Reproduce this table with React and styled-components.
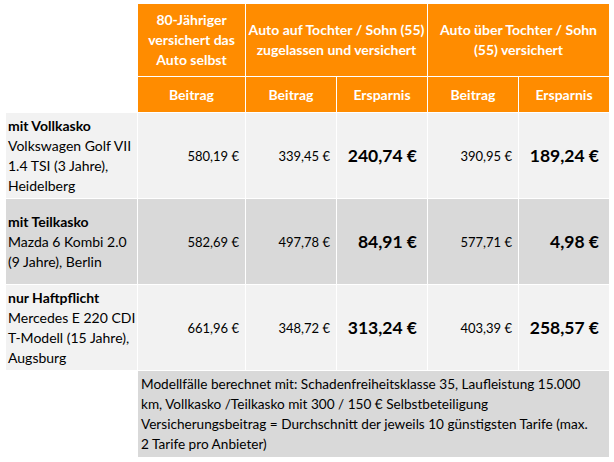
import React from "react";
import styled, { createGlobalStyle } from "styled-components";

const Global = createGlobalStyle`
  html, body { margin: 0; padding: 0; background: #ffffff; }
  body { font-family: Lato, "Noto Sans", "Liberation Sans", sans-serif; color: #000; }
`;

const ORANGE = "#ff8c00";
const LIGHT = "#f2f2f2";
const DARK = "#d9d9d9";

const Page = styled.div`
  padding: 4px 0 0 6px;
`;

const Sheet = styled.div`
  display: grid;
  grid-template-columns: 131px 107px 90px 90px 90px 90px;
  grid-template-rows: 72px 35px 85px 85px 85px 86px;
  gap: 1px;
  font-size: 14px;
  line-height: 20px;
`;

const Corner = styled.div`
  grid-row: span 2;
`;

const HeadCell = styled.div`
  grid-column: span ${(p) => p.$span || 1};
  grid-row: span ${(p) => p.$rows || 1};
  background: ${ORANGE};
  color: #ffffff;
  font-weight: 700;
  display: flex;
  align-items: center;
  justify-content: center;
  text-align: center;
  white-space: nowrap;
  padding: 0 2px;
`;

const LabelCell = styled.div`
  background: ${(p) => (p.$dark ? DARK : LIGHT)};
  display: flex;
  flex-direction: column;
  justify-content: center;
  padding: 0 2px;
  white-space: nowrap;
`;

const Category = styled.span`
  font-weight: 700;
`;

const NumCell = styled.div`
  background: ${(p) => (p.$dark ? DARK : LIGHT)};
  display: flex;
  align-items: center;
  justify-content: flex-end;
  white-space: nowrap;
  padding-right: ${(p) => (p.$big ? "10px" : "6px")};
  font-size: ${(p) => (p.$big ? "17.5px" : "13px")};
  font-weight: ${(p) => (p.$big ? 700 : 400)};
`;

const Blank = styled.div``;

const Note = styled.div`
  grid-column: span 5;
  background: ${DARK};
  padding: 3px 3px 0 3px;
  white-space: nowrap;
  font-size: 13.6px;
`;

const rows = [
  {
    cat: "mit Vollkasko",
    lines: ["Volkswagen Golf VII", "1.4 TSI (3 Jahre),", "Heidelberg"],
    vals: ["580,19 €", "339,45 €", "240,74 €", "390,95 €", "189,24 €"],
  },
  {
    cat: "mit Teilkasko",
    lines: ["Mazda 6 Kombi 2.0", "(9 Jahre), Berlin"],
    vals: ["582,69 €", "497,78 €", "84,91 €", "577,71 €", "4,98 €"],
    dark: true,
  },
  {
    cat: "nur Haftpflicht",
    lines: ["Mercedes E 220 CDI", "T-Modell (15 Jahre),", "Augsburg"],
    vals: ["661,96 €", "348,72 €", "313,24 €", "403,39 €", "258,57 €"],
  },
];

export default function App() {
  return (
    <Page>
      <Global />
      <Sheet>
        <Corner />
        <HeadCell>
          <div>
            80-Jähriger
            <br />
            versichert das
            <br />
            Auto selbst
          </div>
        </HeadCell>
        <HeadCell $span={2}>
          <div>
            Auto auf Tochter / Sohn (55)
            <br />
            zugelassen und versichert
          </div>
        </HeadCell>
        <HeadCell $span={2}>
          <div>
            Auto über Tochter / Sohn
            <br />
            (55) versichert
          </div>
        </HeadCell>
        <HeadCell>Beitrag</HeadCell>
        <HeadCell>Beitrag</HeadCell>
        <HeadCell>Ersparnis</HeadCell>
        <HeadCell>Beitrag</HeadCell>
        <HeadCell>Ersparnis</HeadCell>

        {rows.map((r) => (
          <React.Fragment key={r.cat}>
            <LabelCell $dark={r.dark}>
              <Category>{r.cat}</Category>
              {r.lines.map((l) => (
                <span key={l}>{l}</span>
              ))}
            </LabelCell>
            {r.vals.map((v, i) => (
              <NumCell key={i} $dark={r.dark} $big={i === 2 || i === 4}>
                {v}
              </NumCell>
            ))}
          </React.Fragment>
        ))}

        <Blank />
        <Note>
          Modellfälle berechnet mit: Schadenfreiheitsklasse 35, Laufleistung 15.000
          <br />
          km, Vollkasko /Teilkasko mit 300 / 150 € Selbstbeteiligung
          <br />
          Versicherungsbeitrag = Durchschnitt der jeweils 10 günstigsten Tarife (max.
          <br />2 Tarife pro Anbieter)
        </Note>
      </Sheet>
    </Page>
  );
}
